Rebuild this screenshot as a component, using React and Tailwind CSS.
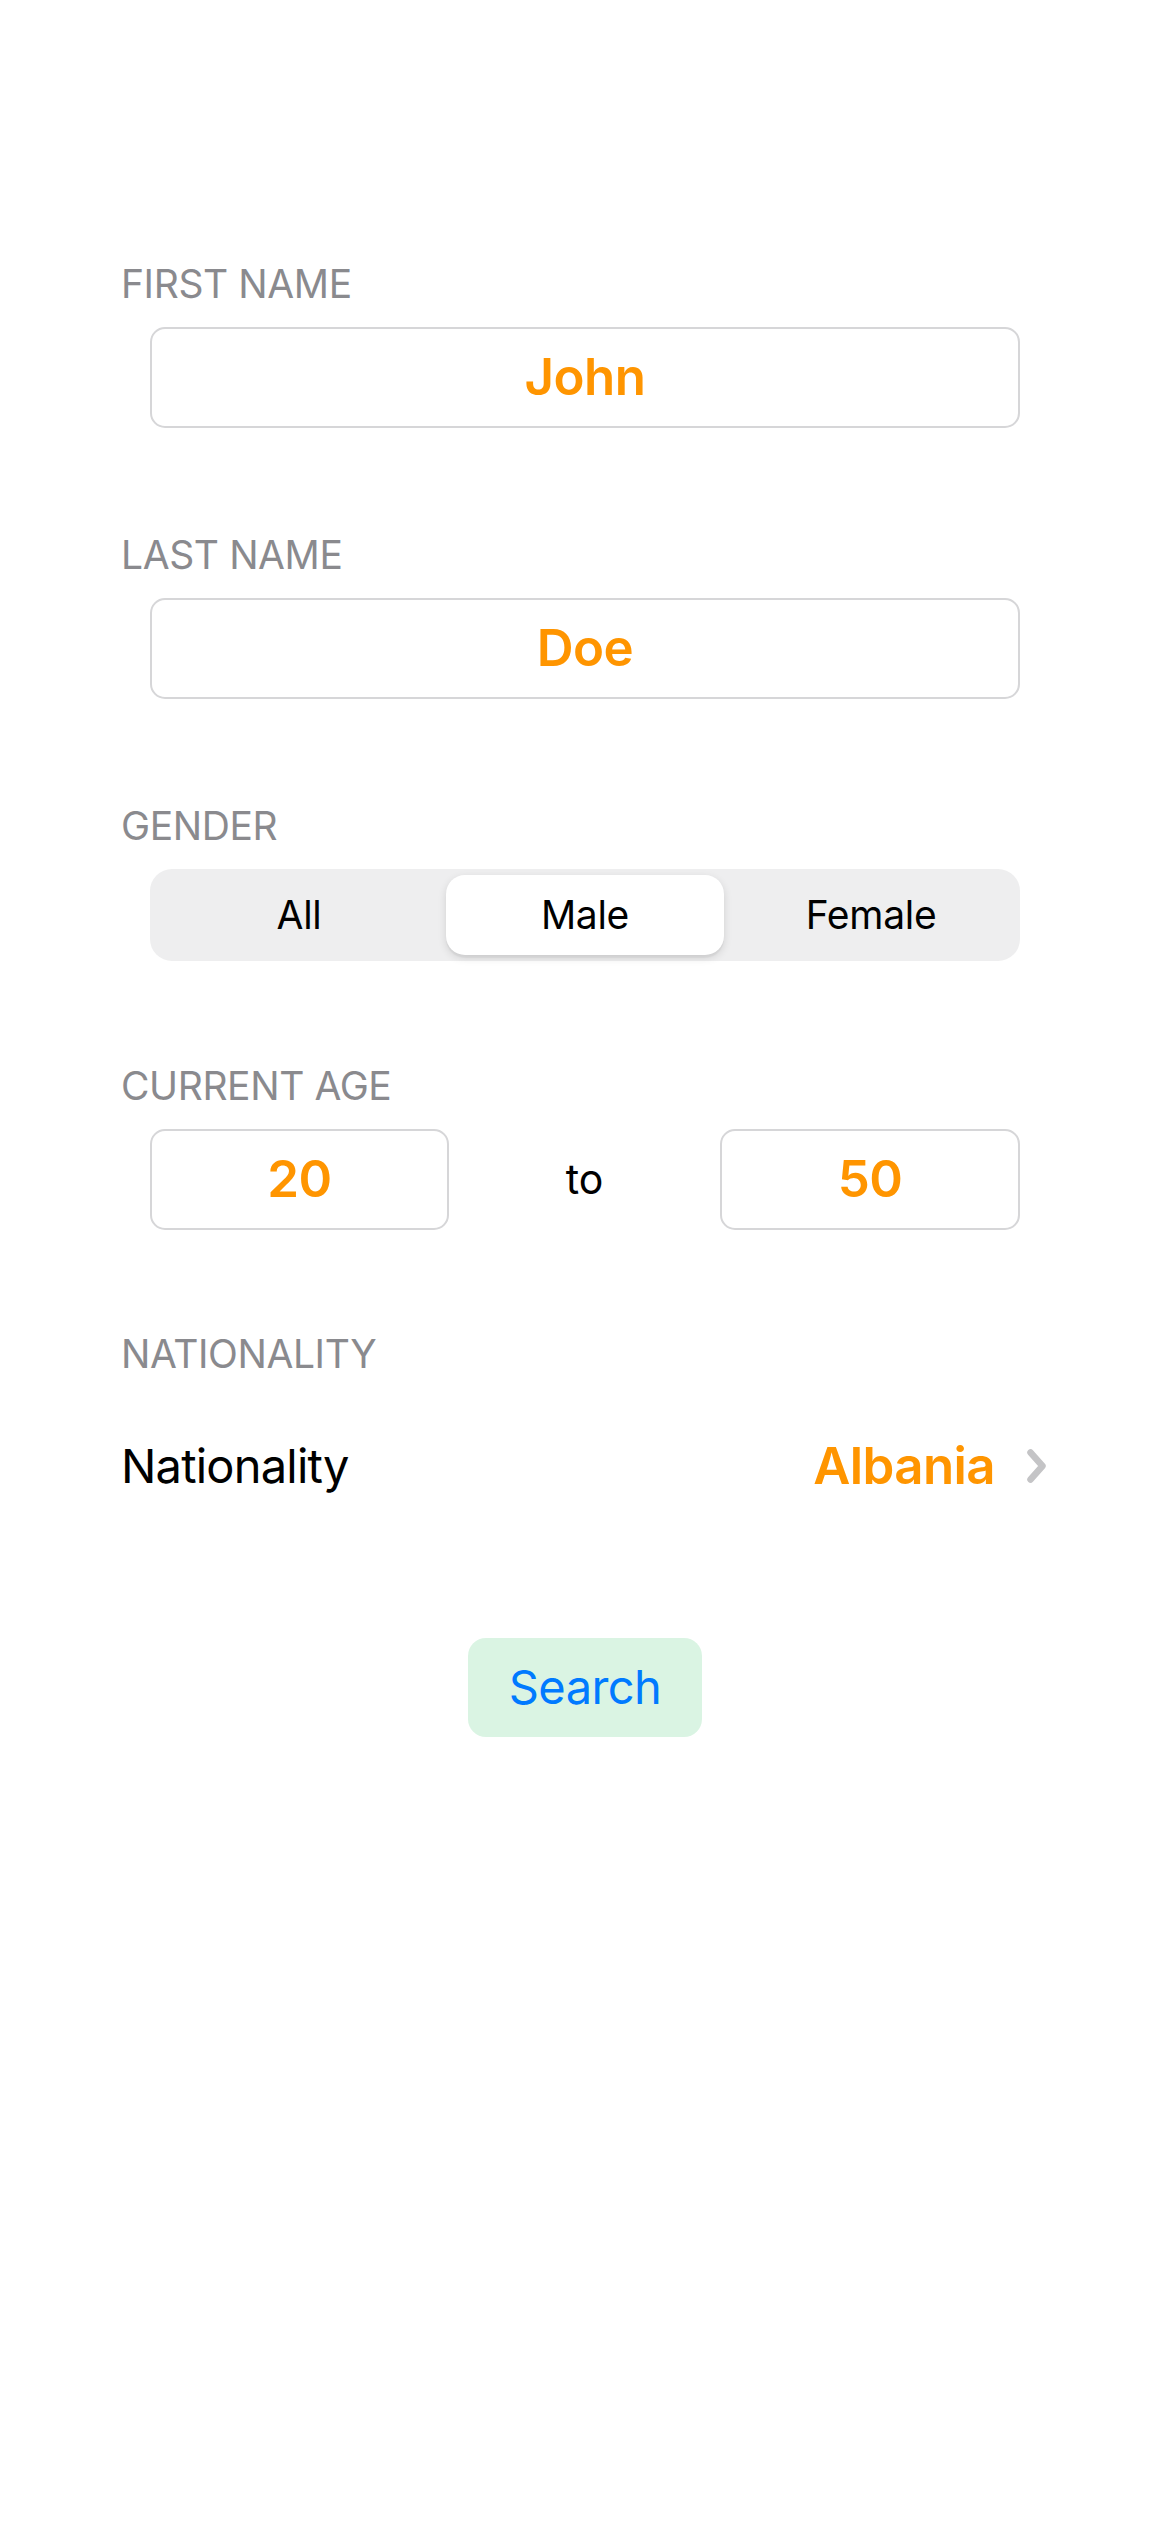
const Label = ({ children, className = "" }) => (
  <div
    className={`px-[121px] text-[39px] leading-[47px] tracking-[-0.4px] text-[#8a8a8e] ${className}`}
  >
    {children}
  </div>
);

const ValueBox = ({ value, className = "" }) => (
  <div
    className={`h-[101px] rounded-[15px] border-2 border-[#d6d6d8] flex items-center justify-center text-[51px] font-semibold tracking-[-0.5px] text-[#ff9500] ${className}`}
  >
    {value}
  </div>
);

const genders = ["All", "Male", "Female"];

export default function App() {
  const selected = "Male";

  return (
    <div
      className="w-[1170px] min-h-[2532px] bg-white pt-[260px]"
      style={{ fontFamily: "Inter, 'Noto Sans', sans-serif" }}
    >
      <Label>FIRST NAME</Label>
      <ValueBox value="John" className="mx-[150px] mt-[20px]" />

      <Label className="mt-[103px]">LAST NAME</Label>
      <ValueBox value="Doe" className="mx-[150px] mt-[20px]" />

      <Label className="mt-[103px]">GENDER</Label>
      <div className="mx-[150px] mt-[20px] h-[92px] rounded-[22px] bg-[#eeeeef] p-[6px] grid grid-cols-3">
        {genders.map((g) => (
          <div
            key={g}
            className={`flex items-center justify-center text-[39px] tracking-[-0.3px] text-black ${
              g === selected
                ? "mx-[4px] rounded-[19px] bg-white shadow-[0_3px_8px_rgba(0,0,0,0.12),0_3px_1px_rgba(0,0,0,0.04)]"
                : ""
            }`}
          >
            {g}
          </div>
        ))}
      </div>

      <Label className="mt-[101px]">CURRENT AGE</Label>
      <div className="mx-[150px] mt-[20px] flex items-center">
        <ValueBox value="20" className="w-[299px]" />
        <div className="flex-1 text-center text-[41px] text-black">to</div>
        <ValueBox value="50" className="w-[300px]" />
      </div>

      <Label className="mt-[100px]">NATIONALITY</Label>
      <div className="mt-[23px] h-[132px] px-[121px] flex items-center">
        <div className="flex-1 text-[47px] tracking-[-0.8px] text-black">
          Nationality
        </div>
        <div className="text-[51px] font-semibold tracking-[-0.6px] text-[#ff9500]">
          Albania
        </div>
        <svg
          width="20"
          height="34"
          viewBox="0 0 20 34"
          className="ml-[32px] mr-[2px]"
        >
          <path
            d="M3.5 3.5 L15.5 17 L3.5 30.5"
            fill="none"
            stroke="#c4c4c6"
            strokeWidth="6.5"
            strokeLinecap="round"
            strokeLinejoin="round"
          />
        </svg>
      </div>

      <div className="mt-[106px] flex justify-center">
        <button className="w-[234px] h-[99px] rounded-[18px] bg-[#daf4e3] text-[47px] tracking-[-0.6px] text-[#007aff]">
          Search
        </button>
      </div>
    </div>
  );
}
